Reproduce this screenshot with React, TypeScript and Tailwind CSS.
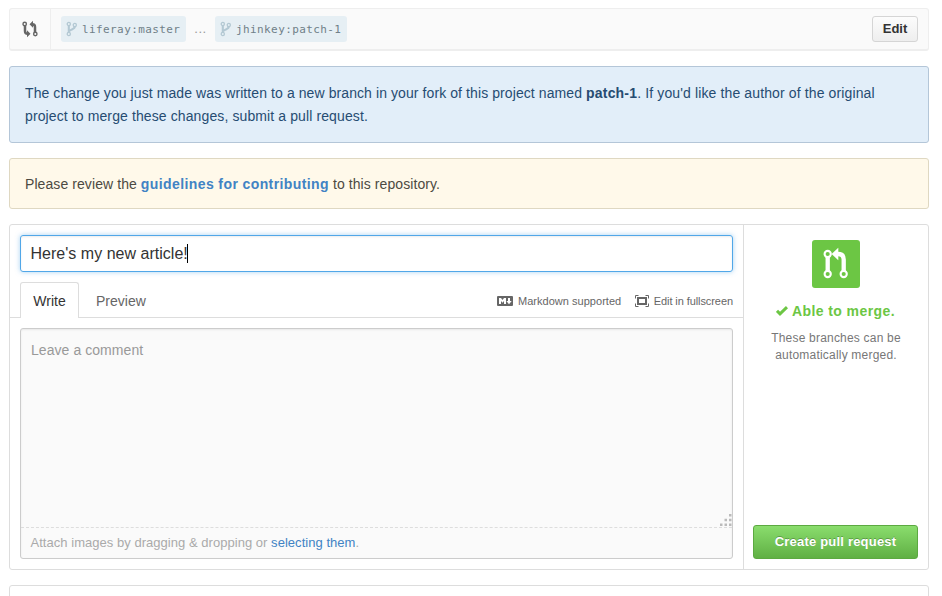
function BranchIcon() {
  return (
    <svg width="12" height="16" viewBox="0 0 12 16" fill="none" stroke="#b3c8d3" className="mb-px shrink-0">
      <circle cx="2.8" cy="3" r="1.6" strokeWidth="1.3" />
      <circle cx="2.800" cy="13" r="1.6" strokeWidth="1.3" />
      <circle cx="8.800" cy="4" r="1.6" strokeWidth="1.3" />
      <path d="M2.800 4.600v6.800M8.800 5.600c0 3.200-5 2.400-5.400 4.800" strokeWidth="2.1" />
    </svg>
  );
}

function CompareIcon() {
  return (
    <svg width="16" height="18" viewBox="0 0 16 18" fill="none" stroke="#666" className="-mt-px -ml-px shrink-0">
      <circle cx="2.7" cy="4" r="1.7" strokeWidth="1.400" />
      <circle cx="13.300" cy="14" r="1.7" strokeWidth="1.400" />
      <path d="M3 5.600V11c0 2 .8 2.800 2.600 2.800M13 12.400V7c0-2-.8-2.800-2.600-2.800" strokeWidth="2.500" />
      <path d="M5 10.300v7l3.500-3.500zM11 .7v7L7.500 4.200z" fill="#666" stroke="none" />
    </svg>
  );
}

function PullRequestIcon() {
  return (
    <svg width="48" height="48" viewBox="0 0 48 48" fill="none" stroke="#fff">
      <path d="M15.700 17v14M31.700 31V19.500c0-3.600-1.900-5.500-5.700-5.500" strokeWidth="4.300" />
      <path d="M26.300 7.800v12.400L19.600 14z" fill="#fff" stroke="none" />
      <circle cx="15.700" cy="14" r="3.100" strokeWidth="2.100" fill="#6cc644" />
      <circle cx="15.700" cy="34" r="3.100" strokeWidth="2.100" fill="#6cc644" />
      <circle cx="31.700" cy="34" r="3.100" strokeWidth="2.100" fill="#6cc644" />
    </svg>
  );
}

function MarkdownIcon() {
  return (
    <svg width="16" height="10" viewBox="0 0 16 10" className="shrink-0">
      <rect width="16" height="10" rx="1" fill="#666" />
      <path d="M2 8V2h2l1.500 2L7 2h2v6H7V5L5.500 6.800 4 5v3zM11 2h2v3h1.700L12 8.200 9.400 5H11z" fill="#fff" />
    </svg>
  );
}

function FullscreenIcon() {
  return (
    <svg width="14" height="12" viewBox="0 0 14 12" fill="none" stroke="#666" className="shrink-0">
      <path d="M.5 3.500v-3h3M10.500 .5h3v3M13.500 8.500v3h-3M3.500 11.500h-3v-3" />
      <rect x="3" y="3" width="8" height="6" strokeWidth="2" />
    </svg>
  );
}

function Branch({ name, width }: { name: string; width: string }) {
  return (
    <span className={`flex h-[26px] items-center rounded-[3px] bg-[#e6eff4] pl-[5px] ${width}`}>
      <BranchIcon />
      <span className="ml-1 pt-px font-['DejaVu_Sans_Mono',monospace] text-[11px] leading-4 tracking-[0.4px] text-[#708088]">{name}</span>
    </span>
  );
}

export default function App() {
  return (
    <main className="h-[596px] w-[942px] overflow-hidden bg-white pt-2 pl-[9px] font-['Liberation_Sans',Arial,sans-serif] text-sm text-[#333]">
      <div className="w-[920px]">
        <header className="flex h-[43px] items-stretch rounded-[3px] border border-b-2 border-[#eee] bg-[#fafafa]">
          <div className="flex w-[41px] items-center justify-center border-r border-[#eee]">
            <CompareIcon />
          </div>
          <div className="flex flex-1 items-center pl-[10px]">
            <Branch name="liferay:master" width="w-[125px]" />
            <span className="w-[29px] text-center text-[13px] tracking-[0.5px] text-[#999]">...</span>
            <Branch name="jhinkey:patch-1" width="w-[132px]" />
          </div>
          <button className="mr-[10px] h-[26px] w-[46px] self-center rounded-[3px] border border-[#d5d5d5] bg-linear-to-b from-[#fcfcfc] to-[#eee] pt-px text-[13px] font-bold text-[#333]">Edit</button>
        </header>

        <section className="mt-[15px] h-[77px] rounded-[3px] border border-[#b4c6d8] bg-[#e2eef9] px-[15px] pt-[15px] leading-[23px] whitespace-nowrap text-[#264c72]">
          <p className="tracking-[0.088px]">The change you just made was written to a new branch in your fork of this project named <b className="tracking-[0.2px]">patch-1</b><span className="tracking-[0.125px]">. If you'd like the author of the original</span></p>
          <p className="tracking-[0.11px]">project to merge these changes, submit a pull request.</p>
        </section>

        <section className="mt-[15px] h-[51px] rounded-[3px] border border-[#dfd8c2] bg-[#fff9ea] px-[15px] pt-[14px] leading-[22px] tracking-[0.08px] text-[#4c4a42]">
          Please review the <a className="font-bold tracking-[0.4px] text-[#4183c4]">guidelines for contributing</a> to this repository.
        </section>

        <section className="mt-[15px] flex h-[346px] rounded-[3px] border border-[#ddd]">
          <div className="flex w-[734px] flex-col border-r border-[#ddd] pt-[10px]">
            <div className="mx-[10px] flex h-[37px] items-center rounded-[3px] border border-[#51a7e8] pl-[9.500px] text-base text-[#333] shadow-[inset_0_1px_2px_rgba(0,0,0,0.075),0_0_5px_rgba(81,167,232,0.5)]">
              <span className="tracking-[0.02px]">Here's my new article!</span>
              <span className="-ml-px h-[19px] w-px bg-black" />
            </div>
            <div className="mt-[10px] flex h-9 items-center border-b border-[#ddd] pr-[10px] pl-[10px]">
              <div className="-mb-px flex h-9 w-[59px] items-center justify-center rounded-t-[3px] border border-b-0 border-[#ddd] bg-white">Write</div>
              <div className="ml-[17px] pt-[3px] text-[#666]">Preview</div>
              <div className="ml-auto flex items-center pt-[3px] text-[11px] text-[#666]">
                <MarkdownIcon />
                <span className="ml-[5px] pt-px tracking-[0.03px]">Markdown supported</span>
                <span className="ml-[14px] flex"><FullscreenIcon /></span>
                <span className="ml-[4.500px] pt-px tracking-[-0.08px]">Edit in fullscreen</span>
              </div>
            </div>
            <div className="mx-[10px] mt-[10px] flex h-[231px] flex-col rounded-[3px] border border-[#ccc] bg-[#fafafa] shadow-[inset_0_1px_2px_rgba(0,0,0,0.075)]">
              <div className="flex flex-1 justify-between">
                <span className="pt-[11px] pl-[10px] leading-5 tracking-[0.06px] text-[#999]">Leave a comment</span>
                <svg width="13" height="13" viewBox="0 0 13 13" fill="#bbb" className="self-end">
                  <path d="M10 0h2.500v2.500h-2.500zM5.500 4.700h2.500v2.500h-2.500zM10 4.700h2.500v2.500h-2.500zM1 9.400h2.500v2.500H1zM5.500 9.400h2.500v2.500h-2.500zM10 9.400h2.500v2.500h-2.500z" />
                </svg>
              </div>
              <div className="h-[31px] border-t border-dashed border-[#ddd] pt-[5px] pl-[9.500px] text-[13px] leading-5 tracking-[0.035px] text-[#aaa]">
                Attach images by dragging &amp; dropping or <a className="text-[#4183c4]">selecting them</a>.
              </div>
            </div>
          </div>
          <aside className="flex flex-1 flex-col items-center pt-[15px] pr-px">
            <div className="-mr-px size-12 rounded-[3px] bg-[#6cc644]"><PullRequestIcon /></div>
            <div className="mt-[13px] flex items-center font-bold leading-5 tracking-[0.4px] text-[#6cc644]">
              <svg width="12" height="10" viewBox="0 0 12 10" className="mr-1" fill="none" stroke="#6cc644" strokeWidth="3"><path d="M1 4.800l3 3L11 1.200" /></svg>
              Able to merge.
            </div>
            <p className="-mr-px mt-[9px] text-center text-xs leading-[17px] tracking-[0.2px] text-[#777]">These branches can be<br />automatically merged.</p>
            <button className="mt-auto mb-[10px] h-[34px] w-[165px] rounded-[3px] border border-[#5ca941] bg-linear-to-b from-[#8add6d] to-[#60b044] text-[13px] font-bold tracking-[0.2px] text-white [text-shadow:0_-1px_0_rgba(0,0,0,0.25)]">Create pull request</button>
          </aside>
        </section>
        <section className="mt-[15px] h-10 rounded-[3px] border border-[#ddd]" />
      </div>
    </main>
  );
}
